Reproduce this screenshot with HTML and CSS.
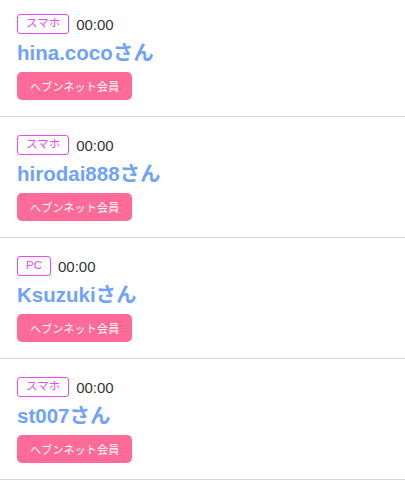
FILE: index.html
```html
<!DOCTYPE html>
<html lang="ja">
<head>
    <meta charset="UTF-8">
    <meta name="viewport" content="width=device-width, initial-scale=1.0">
    <title>アクセス履歴</title>
    <link rel="stylesheet" href="styles.css">
</head>
<body>
    <ul class="visitors">
        <li class="visitor">
            <div class="meta"><span class="device">スマホ</span><span class="time">00:00</span></div>
            <div class="name">hina.cocoさん</div>
            <span class="member">ヘブンネット会員</span>
        </li>
        <li class="visitor">
            <div class="meta"><span class="device">スマホ</span><span class="time">00:00</span></div>
            <div class="name">hirodai888さん</div>
            <span class="member">ヘブンネット会員</span>
        </li>
        <li class="visitor">
            <div class="meta"><span class="device">PC</span><span class="time">00:00</span></div>
            <div class="name">Ksuzukiさん</div>
            <span class="member">ヘブンネット会員</span>
        </li>
        <li class="visitor">
            <div class="meta"><span class="device">スマホ</span><span class="time">00:00</span></div>
            <div class="name">st007さん</div>
            <span class="member">ヘブンネット会員</span>
        </li>
    </ul>
</body>
</html>
```

FILE: styles.css
```css
body {
    margin: 0;
    background: #fff;
    font-family: 'Liberation Sans', 'Noto Sans CJK JP', sans-serif;
    color: #333;
}
.visitors {
    list-style: none;
    margin: 0;
    padding: 0;
}
.visitor {
    display: flex;
    flex-direction: column;
    align-items: flex-start;
    height: 121px;
    padding: 18px 17px 0;
    box-sizing: border-box;
    border-bottom: 1px solid #d6d6d6;
}
.visitor:first-child {
    height: 117px;
    padding-top: 14px;
}
.meta {
    display: flex;
    align-items: center;
    gap: 7px;
    height: 20px;
}
.device {
    display: inline-flex;
    align-items: center;
    justify-content: center;
    height: 20px;
    padding: 0 8px;
    box-sizing: border-box;
    border: 1px solid #e64bf2;
    border-radius: 3px;
    color: #e64bf2;
    font-size: 11.5px;
    line-height: 1;
}
.time {
    font-size: 15px;
    color: #333;
}
.name {
    margin-top: 6px;
    height: 26px;
    font-size: 20.5px;
    line-height: 26px;
    font-weight: bold;
    color: #70a2f6;
}
.member {
    margin-top: 6px;
    display: inline-flex;
    align-items: center;
    height: 28px;
    padding: 0 13px;
    border-radius: 5px;
    background: #ff6b98;
    color: #fff;
    font-size: 11px;
    letter-spacing: 0.2px;
}
```
